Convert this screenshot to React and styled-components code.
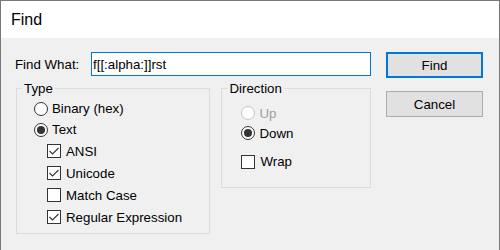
import React from 'react';
import styled, { createGlobalStyle } from 'styled-components';

const GlobalStyle = createGlobalStyle`
  body {
    margin: 0;
    font-family: "Liberation Sans", Arial, sans-serif;
    font-size: 13.3px;
    color: #000;
  }
`;

function Radio({ checked, disabled, children, height }) {
  return (
    <Option $h={height} $gap={4} $disabled={disabled}>
      <RadioCircle $disabled={disabled}>{checked && <RadioDot />}</RadioCircle>
      {children}
    </Option>
  );
}

function Check({ checked, children, height }) {
  return (
    <Option $h={height} $gap={5}>
      <CheckBox>
        {checked && (
          <svg width="12" height="12" viewBox="0 0 12 12">
            <polyline points="1.5,6 4.5,9 10.5,3" fill="none" stroke="#333" strokeWidth="1.1" />
          </svg>
        )}
      </CheckBox>
      {children}
    </Option>
  );
}

function App() {
  return (
    <Window>
      <GlobalStyle />
      <TitleBar>Find</TitleBar>
      <Body>
        <LeftCol>
          <FindRow>
            <FieldLabel>Find What:</FieldLabel>
            <SearchInput defaultValue="f[[:alpha:]]rst" />
          </FindRow>
          <GroupsRow>
            <Group $w={195} $h={153}>
              <Legend>Type</Legend>
              <GroupBody $top={2} $left={17}>
                <Radio height={21}>Binary (hex)</Radio>
                <Radio height={21} checked>Text</Radio>
                <SubOptions>
                  <Check height={22} checked>ANSI</Check>
                  <Check height={22} checked>Unicode</Check>
                  <Check height={22}>Match Case</Check>
                  <Check height={22} checked>Regular Expression</Check>
                </SubOptions>
              </GroupBody>
            </Group>
            <Group $w={150} $h={107}>
              <Legend>Direction</Legend>
              <GroupBody $top={7} $left={19}>
                <Radio height={20} disabled>Up</Radio>
                <Radio height={20} checked>Down</Radio>
                <Spacer />
                <Check height={21}>Wrap</Check>
              </GroupBody>
            </Group>
          </GroupsRow>
        </LeftCol>
        <ButtonCol>
          <Button $primary>Find</Button>
          <Button>Cancel</Button>
        </ButtonCol>
      </Body>
    </Window>
  );
}

const Window = styled.div`
  width: 500px;
  height: 250px;
  box-sizing: border-box;
  border: 1px solid #777;
  border-bottom: none;
  background: #f0f0f0;
  display: flex;
  flex-direction: column;
  overflow: hidden;
`;

const TitleBar = styled.div`
  height: 37px;
  flex-shrink: 0;
  background: #fff;
  display: flex;
  align-items: center;
  padding-left: 10px;
  font-size: 16px;
`;

const Body = styled.div`
  display: flex;
  padding: 14px 0 0 14px;
`;

const LeftCol = styled.div`
  width: 356px;
  display: flex;
  flex-direction: column;
`;

const FindRow = styled.div`
  display: flex;
  align-items: center;
  height: 24px;
`;

const FieldLabel = styled.span`
  width: 76px;
`;

const SearchInput = styled.input`
  width: 280px;
  height: 24px;
  box-sizing: border-box;
  border: 1px solid #0078d7;
  padding: 0 1px;
  margin: 0;
  font-family: "Liberation Sans", Arial, sans-serif;
  font-size: 13.3px;
  color: #000;
  background: #fff;
  outline: none;
`;

const GroupsRow = styled.div`
  display: flex;
  align-items: flex-start;
  gap: 11px;
  margin-top: 5px;
  padding-left: 1px;
`;

const Group = styled.fieldset`
  margin: 0;
  padding: 0;
  box-sizing: border-box;
  width: ${(p) => p.$w}px;
  height: ${(p) => p.$h}px;
  border: 1px solid #dcdcdc;
`;

const Legend = styled.legend`
  margin-left: 5px;
  padding: 0 2px;
  line-height: 15px;
`;

const GroupBody = styled.div`
  display: flex;
  flex-direction: column;
  padding: ${(p) => p.$top}px 0 0 ${(p) => p.$left}px;
`;

const SubOptions = styled.div`
  display: flex;
  flex-direction: column;
  padding-left: 13px;
`;

const Spacer = styled.div`
  height: 8px;
`;

const Option = styled.div`
  display: flex;
  align-items: center;
  gap: ${(p) => p.$gap}px;
  height: ${(p) => p.$h}px;
  color: ${(p) => (p.$disabled ? '#a0a0a0' : '#000')};
`;

const RadioCircle = styled.span`
  width: 14px;
  height: 14px;
  box-sizing: border-box;
  border-radius: 50%;
  border: 1px solid ${(p) => (p.$disabled ? '#c4c4c4' : '#333')};
  background: #fff;
  display: flex;
  align-items: center;
  justify-content: center;
  flex-shrink: 0;
`;

const RadioDot = styled.span`
  width: 8px;
  height: 8px;
  border-radius: 50%;
  background: #333;
`;

const CheckBox = styled.span`
  width: 14px;
  height: 14px;
  box-sizing: border-box;
  border: 1px solid #333;
  background: #fff;
  display: flex;
  align-items: center;
  justify-content: center;
  flex-shrink: 0;
`;

const ButtonCol = styled.div`
  display: flex;
  flex-direction: column;
  gap: 13px;
  margin-left: 15px;
`;

const Button = styled.button`
  width: 97px;
  height: 26px;
  box-sizing: border-box;
  margin: 0;
  padding: 0;
  background: #e1e1e1;
  border: ${(p) => (p.$primary ? '2px solid #0078d7' : '1px solid #adadad')};
  font-family: "Liberation Sans", Arial, sans-serif;
  font-size: 13.3px;
  color: #000;
`;

export default App;
